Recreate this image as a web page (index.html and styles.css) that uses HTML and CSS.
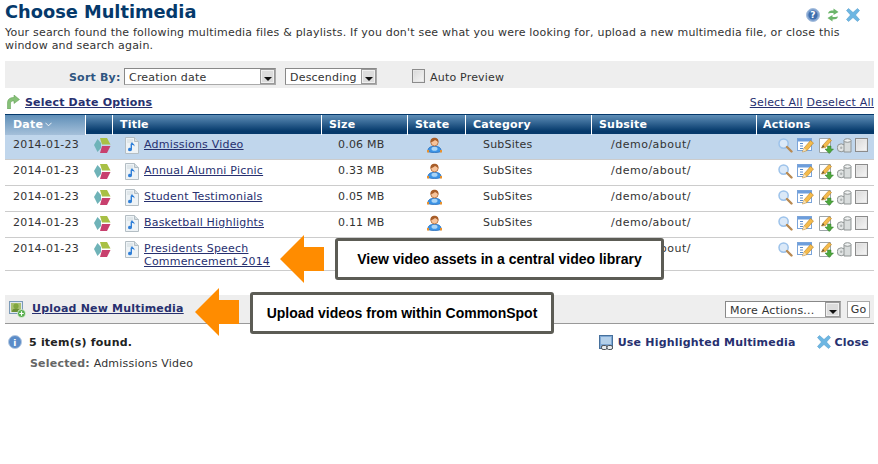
FILE: index.html
```html
<!DOCTYPE html>
<html lang="en">
<head>
<meta charset="utf-8">
<title>Choose Multimedia</title>
<link rel="stylesheet" href="styles.css">
</head>
<body>
<svg class="defs" width="0" height="0" aria-hidden="true">
  <defs>
    <symbol id="cube" viewBox="0 0 17 15">
      <path d="M0 7 L3.5 1 L7 5 L7 10 L3.5 14 Z" fill="#6fb3b8"/>
      <path d="M6 0 L13 0 L16.5 6.5 L8 6.5 Z" fill="#a8c045"/>
      <path d="M8 8 L16.5 8 L13 15 L6 15 Z" fill="#c8406e"/>
    </symbol>
    <symbol id="doc" viewBox="0 0 16 17">
      <path d="M1.5 0.5H10.5L14.5 4.5V16.5H1.5Z" fill="#eef3f6" stroke="#b4bec4"/>
      <path d="M10.5 .5V4.5H14.5" fill="#d6dfe4" stroke="#b4bec4"/>
      <path d="M3 3H9M3 5H9" stroke="#c8d2d8" stroke-width=".8"/>
      <path d="M8 5V12.6A2 1.7 0 1 1 6.6 11V7Z" fill="#2f7fd8"/>
      <path d="M8 5C9 7 11 7 10.4 9.6C10 8.4 9 8 8 8Z" fill="#2f7fd8"/>
    </symbol>
    <symbol id="user" viewBox="0 0 15 16">
      <path d="M.8 14.5C.8 10.5 3.5 9.3 7.5 9.3S14.2 10.5 14.2 14.5C11 16 4 16 .8 14.5Z" fill="#3d94e6" stroke="#2569b4" stroke-width=".7"/>
      <ellipse cx="7.5" cy="11.8" rx="3" ry="2" fill="#a9d4f6"/>
      <circle cx="7.5" cy="5.2" r="3.7" fill="#f7c39a" stroke="#a8602c" stroke-width=".7"/>
      <path d="M3.6 5.4C3.2 1.6 5.4.8 7.5.8S11.8 1.6 11.4 5.4C10.4 4.2 9.2 3.6 8 3 7 4.2 5 5 3.6 5.4Z" fill="#a85e2a"/>
      <path d="M0 13H2V15.5H0ZM13 13H15V15.5H13Z" fill="#e8912e"/>
    </symbol>
    <symbol id="mag" viewBox="0 0 15 15">
      <circle cx="5.6" cy="5.6" r="4.6" fill="#dbe9f8" stroke="#9cc2ea" stroke-width="1.5"/>
      <path d="M9 9L13.5 13.5" stroke="#b98a52" stroke-width="2.4" stroke-linecap="round"/>
    </symbol>
    <symbol id="form" viewBox="0 0 17 16">
      <rect x=".5" y="1.5" width="14" height="12" fill="#fff" stroke="#7aa4da"/>
      <rect x="1" y="2" width="13" height="2.5" fill="#6d9edc"/>
      <path d="M3 6.5H6M3 9H6M3 11.5H6" stroke="#5a8cc8" stroke-width="1.2"/>
      <path d="M5.5 15L7 11L13.5 3.5L16.5 6L10 13.5Z" fill="#f5bb4a" stroke="#b5802a" stroke-width=".6"/>
      <path d="M5.5 15L7 11L9.5 13.2Z" fill="#f3dfb8"/>
    </symbol>
    <symbol id="editdown" viewBox="0 0 16 17">
      <path d="M1.5 1.5H12.5V15.5H1.5Z" fill="#fff" stroke="#9ea6aa"/>
      <path d="M3.5 11L5 8L11 1.5L13.5 3.5L7.5 10.5Z" fill="#f5bb4a" stroke="#b5802a" stroke-width=".6"/>
      <path d="M3.5 11L5 8L6.5 9.8Z" fill="#6b5a3a"/>
      <path d="M9.5 9H13V12H15.5L11.2 16.5L7 12H9.5Z" fill="#4da83d" stroke="#327a28" stroke-width=".5"/>
    </symbol>
    <symbol id="bin" viewBox="0 0 15 15">
      <circle cx="4.2" cy="9.8" r="4" fill="#e2e5e5" stroke="#8f9494"/>
      <circle cx="4.2" cy="9.8" r="1.2" fill="#aeb3b3"/>
      <path d="M7 2.5H14V14H7Z" fill="#d8dcdc" stroke="#8f9494"/>
      <ellipse cx="10.5" cy="2.5" rx="3.5" ry="1.8" fill="#f0f2f2" stroke="#8f9494"/>
    </symbol>
    <symbol id="xmark" viewBox="0 0 14 14">
      <path d="M0.5 2.5L2.5 .5L7 4.5L11.5 .5L13.5 2.5L9.5 7L13.5 11.5L11.5 13.5L7 9.5L2.5 13.5L.5 11.5L4.5 7Z" fill="#6db6e2" stroke="#4a96c8" stroke-width=".5"/>
    </symbol>
    <symbol id="help" viewBox="0 0 14 14">
      <circle cx="7" cy="7" r="6.5" fill="#7fa2d0" stroke="#a6bedc"/>
      <circle cx="7" cy="7" r="4.6" fill="#3f6fae"/>
      <text x="7" y="10" text-anchor="middle" class="glyph">?</text>
    </symbol>
    <symbol id="refresh" viewBox="0 0 12 14">
      <path d="M1 5.5C1.5 3 3.5 2.6 6.5 2.6V.5L11.5 4L6.5 7V5C4.5 5 3 5 1 5.5Z" fill="#6cb56a"/>
      <path d="M11 8.5C10.5 11 8.5 11.4 5.5 11.4V13.5L.5 10L5.5 7V9C7.5 9 9 9 11 8.5Z" fill="#6cb56a"/>
    </symbol>
    <symbol id="info" viewBox="0 0 14 14">
      <circle cx="7" cy="7" r="6.5" fill="#5b8cc8" stroke="#b4c8e0"/>
      <text x="7" y="11" text-anchor="middle" class="glyph">i</text>
    </symbol>
  </defs>
</svg>

<main class="page">
  <header class="head">
    <h1 class="title">Choose Multimedia</h1>
    <div class="head-icons">
      <svg class="ic14"><use href="#help"/></svg>
      <svg class="ic-r"><use href="#refresh"/></svg>
      <svg class="ic14"><use href="#xmark"/></svg>
    </div>
  </header>
  <p class="intro">Your search found the following multimedia files &amp; playlists. If you don't see what you were looking for, upload a new multimedia file, or close this window and search again.</p>

  <div class="sortbar">
    <span class="sort-label">Sort By:</span>
    <div class="select sel-a"><span class="sel-text">Creation date</span><span class="sel-btn"></span></div>
    <div class="select sel-b"><span class="sel-text">Descending</span><span class="sel-btn"></span></div>
    <span class="check check-auto"></span>
    <span class="auto-label">Auto Preview</span>
  </div>

  <div class="opts">
    <svg class="ic-turn" viewBox="0 0 14 14"><path d="M1.5 14V8C1.5 4 4 2.5 8 2.5V0L13.5 4.5L8 8.5V6C5.5 6 4.5 6.5 4.5 9V14Z" fill="#86c078" stroke="#5b9a4d" stroke-width=".5"/></svg>
    <a class="opts-link" href="#">Select Date Options</a>
    <span class="opts-right"><a href="#">Select All</a> <a href="#">Deselect All</a></span>
  </div>

  <div class="grid">
    <div class="row thead">
      <div class="th th-sorted">Date<svg class="chev" viewBox="0 0 8 5"><path d="M.5 .5L4 4L7.5 .5" fill="none" stroke="#fff"/></svg></div>
      <div class="th"></div>
      <div class="th">Title</div>
      <div class="th">Size</div>
      <div class="th">State</div>
      <div class="th">Category</div>
      <div class="th">Subsite</div>
      <div class="th">Actions</div>
    </div>

    <div class="row tr selected">
      <div class="td">2014-01-23</div>
      <div class="td td-cube"><svg class="ic-cube"><use href="#cube"/></svg></div>
      <div class="td td-title"><svg class="ic-doc"><use href="#doc"/></svg><a href="#">Admissions Video</a></div>
      <div class="td td-size">0.06 MB</div>
      <div class="td td-state"><svg class="ic-user"><use href="#user"/></svg></div>
      <div class="td td-cat">SubSites</div>
      <div class="td td-sub">/demo/about/</div>
      <div class="td td-act"><svg class="a1"><use href="#mag"/></svg><svg class="a2"><use href="#form"/></svg><svg class="a3"><use href="#editdown"/></svg><svg class="a4"><use href="#bin"/></svg><span class="check"></span></div>
    </div>
    <div class="row tr">
      <div class="td">2014-01-23</div>
      <div class="td td-cube"><svg class="ic-cube"><use href="#cube"/></svg></div>
      <div class="td td-title"><svg class="ic-doc"><use href="#doc"/></svg><a href="#">Annual Alumni Picnic</a></div>
      <div class="td td-size">0.33 MB</div>
      <div class="td td-state"><svg class="ic-user"><use href="#user"/></svg></div>
      <div class="td td-cat">SubSites</div>
      <div class="td td-sub">/demo/about/</div>
      <div class="td td-act"><svg class="a1"><use href="#mag"/></svg><svg class="a2"><use href="#form"/></svg><svg class="a3"><use href="#editdown"/></svg><svg class="a4"><use href="#bin"/></svg><span class="check"></span></div>
    </div>
    <div class="row tr">
      <div class="td">2014-01-23</div>
      <div class="td td-cube"><svg class="ic-cube"><use href="#cube"/></svg></div>
      <div class="td td-title"><svg class="ic-doc"><use href="#doc"/></svg><a href="#">Student Testimonials</a></div>
      <div class="td td-size">0.05 MB</div>
      <div class="td td-state"><svg class="ic-user"><use href="#user"/></svg></div>
      <div class="td td-cat">SubSites</div>
      <div class="td td-sub">/demo/about/</div>
      <div class="td td-act"><svg class="a1"><use href="#mag"/></svg><svg class="a2"><use href="#form"/></svg><svg class="a3"><use href="#editdown"/></svg><svg class="a4"><use href="#bin"/></svg><span class="check"></span></div>
    </div>
    <div class="row tr">
      <div class="td">2014-01-23</div>
      <div class="td td-cube"><svg class="ic-cube"><use href="#cube"/></svg></div>
      <div class="td td-title"><svg class="ic-doc"><use href="#doc"/></svg><a href="#">Basketball Highlights</a></div>
      <div class="td td-size">0.11 MB</div>
      <div class="td td-state"><svg class="ic-user"><use href="#user"/></svg></div>
      <div class="td td-cat">SubSites</div>
      <div class="td td-sub">/demo/about/</div>
      <div class="td td-act"><svg class="a1"><use href="#mag"/></svg><svg class="a2"><use href="#form"/></svg><svg class="a3"><use href="#editdown"/></svg><svg class="a4"><use href="#bin"/></svg><span class="check"></span></div>
    </div>
    <div class="row tr tr-tall">
      <div class="td">2014-01-23</div>
      <div class="td td-cube"><svg class="ic-cube"><use href="#cube"/></svg></div>
      <div class="td td-title"><svg class="ic-doc"><use href="#doc"/></svg><a href="#">Presidents Speech Commencement 2014</a></div>
      <div class="td td-size"></div>
      <div class="td td-state"></div>
      <div class="td td-cat"></div>
      <div class="td td-sub">/demo/about/</div>
      <div class="td td-act"><svg class="a1"><use href="#mag"/></svg><svg class="a2"><use href="#form"/></svg><svg class="a3"><use href="#editdown"/></svg><svg class="a4"><use href="#bin"/></svg><span class="check"></span></div>
    </div>
  </div>

  <div class="upload">
    <svg class="ic-up" viewBox="0 0 17 17">
      <rect x=".5" y=".5" width="13" height="12" fill="#dfe8f0" stroke="#7a9ab8"/>
      <rect x="2" y="2" width="10" height="9" fill="#a8c070"/>
      <circle cx="7" cy="5" r="2.6" fill="#7fa63f"/>
      <path d="M3 11C3 8 5 7.5 7 7.5S11 8 11 11Z" fill="#6b8f35"/>
      <circle cx="12.5" cy="12.5" r="4" fill="#55ad4a" stroke="#fff" stroke-width=".6"/>
      <path d="M12.5 10.3V14.7M10.3 12.5H14.7" stroke="#fff" stroke-width="1.2"/>
    </svg>
    <a class="upload-link" href="#">Upload New Multimedia</a>
    <div class="upload-right">
      <div class="select sel-c"><span class="sel-text">More Actions...</span><span class="sel-btn"></span></div>
      <span class="go">Go</span>
    </div>
  </div>

  <div class="status">
    <svg class="ic14"><use href="#info"/></svg>
    <strong class="found">5 item(s) found.</strong>
    <span class="status-right">
      <svg class="ic-use" viewBox="0 0 15 15">
        <rect x=".5" y=".5" width="13" height="13" fill="#7fa8d4" stroke="#46709c"/>
        <rect x="2" y="2" width="10" height="7" fill="#b4d0ea"/>
        <rect x="2.5" y="10.5" width="5.5" height="4" rx="1.6" fill="#e8ecef" stroke="#4a4f55"/>
        <rect x="8" y="10.5" width="5.5" height="4" rx="1.6" fill="#e8ecef" stroke="#4a4f55"/>
      </svg>
      <a class="act-link" href="#">Use Highlighted Multimedia</a>
      <svg class="ic14 ic-close"><use href="#xmark"/></svg>
      <a class="act-link" href="#">Close</a>
    </span>
  </div>
  <p class="selected-line"><b>Selected:</b> Admissions Video</p>

  <svg class="arrow arrow-1" viewBox="0 0 44 48"><path d="M0 24L24 0V12H44V36H24V48Z" fill="#ff8c00"/></svg>
  <div class="callout callout-1">View video assets in a central video library</div>
  <svg class="arrow arrow-2" viewBox="0 0 44 48"><path d="M0 24L24 0V12H44V36H24V48Z" fill="#ff8c00"/></svg>
  <div class="callout callout-2">Upload videos from within CommonSpot</div>
</main>
</body>
</html>
```

FILE: styles.css
```css
* { box-sizing: border-box; }
html, body { margin: 0; background: #fff; }
body {
  font-family: "DejaVu Sans", Verdana, sans-serif;
  font-size: 11px;
  letter-spacing: .2px;
  color: #222;
  width: 878px;
  height: 464px;
  overflow: hidden;
}
.defs { position: absolute; }
.glyph { font: bold 9px "DejaVu Sans", sans-serif; fill: #fff; }
.page { position: relative; width: 878px; height: 464px; padding: 0 4px 0 5px; }
a { color: #27306f; }

.head { display: flex; justify-content: space-between; height: 24px; }
.title { margin: 0; font-size: 17.8px; line-height: 24px; font-weight: bold; color: #05396b; letter-spacing: 0; }
.head-icons { display: flex; align-items: center; gap: 7px; padding: 5px 14px 0 0; }
.ic14 { width: 14px; height: 14px; flex: none; }
.ic-r { width: 12px; height: 14px; flex: none; }

.intro { margin: 0; height: 37px; padding-top: 2px; line-height: 13px; color: #333; }

.sortbar { height: 27px; background: #eee; display: flex; align-items: center; padding-top: 3px; }
.sort-label { margin: 2px 0 0 64px; width: 52px; white-space: nowrap; font-weight: bold; color: #2f5580; }
.select { display: flex; align-items: stretch; height: 17px; background: #fff; border: 1px solid #aaa; border-top-color: #888; border-left-color: #888; }
.sel-text { flex: 1; padding-left: 4px; line-height: 17px; color: #333; white-space: nowrap; overflow: hidden; }
.sel-btn { position: relative; width: 15px; background: #dcdcdc; border: 1px solid #999; box-shadow: inset 0 0 0 1px #f0f0f0; }
.sel-btn::after { content: ""; position: absolute; left: 3px; top: 7px; border: 4px solid transparent; border-top-color: #111; border-bottom: 0; }
.sel-a { width: 152px; margin-left: 3px; }
.sel-b { width: 92px; margin-left: 9px; }
.check { display: inline-block; width: 13px; height: 14px; border: 1px solid #8b8b8b; background: linear-gradient(135deg, #d8d8d8, #f6f6f6); box-shadow: inset 0 0 0 1px #e6e6e6; flex: none; }
.check-auto { margin-left: 35px; }
.auto-label { margin: 2px 0 0 5px; color: #333; }

.opts { height: 26px; display: flex; align-items: center; padding-top: 3px; }
.ic-turn { width: 14px; height: 14px; margin: 0 0 1px 1px; }
.opts-link { margin-left: 5px; font-weight: bold; }
.opts-right { margin-left: auto; color: #27306f; }

.row { display: grid; grid-template-columns: 81px 27px 209px 86px 58px 126px 165px 117px; }
.thead { height: 20px; background: linear-gradient(#5f8fb8, #05396b 85%); border-top: 1px solid #05396b; }
.th { color: #fff; font-weight: bold; line-height: 20px; padding-left: 7px; border-right: 1px solid #fff; }
.th:first-child { padding-left: 8px; }
.th:last-child { border-right: 0; padding-left: 6px; }
.th-sorted { background: linear-gradient(#5f8fb8, #a5c0da); color: #fff; }
.chev { width: 7px; height: 5px; margin: 0 0 1px 2px; }

.tr { height: 26px; border-bottom: 1px solid #ccc; }
.tr-tall { height: 33px; }
.selected { background: #c0d6ec; }
.td { padding: 3px 0 0 8px; line-height: 16px; color: #333; }
.td-cube { padding: 4px 0 0 8px; }
.ic-cube { display: block; width: 17px; height: 15px; }
.td-title { display: flex; padding-left: 11px; gap: 4px; line-height: 13px; padding-top: 4px; }
.td-title a { width: 140px; }
.ic-doc { width: 16px; height: 17px; flex: none; margin-top: -1px; }
.td-size { padding-left: 16px; }
.td-state { padding: 3px 0 0 19px; }
.ic-user { display: block; width: 15px; height: 16px; }
.td-cat { padding-left: 17px; }
.td-sub { padding-left: 19px; letter-spacing: .5px; }
.td-act { display: flex; padding: 3px 0 0 22px; align-items: flex-start; }
.td-act svg { flex: none; display: block; }
.a1 { width: 15px; height: 15px; margin: 1px 0 0 -1px; }
.a2 { width: 17px; height: 16px; margin-left: 4px; }
.a3 { width: 16px; height: 17px; margin-left: 4px; }
.a4 { width: 15px; height: 15px; margin: 1px 0 0 3px; }
.td-act .check { margin-left: 3px; margin-top: 1px; }

.upload { margin-top: 24px; height: 29px; background: #eee; border-bottom: 1px solid #999; display: flex; align-items: center; }
.ic-up { width: 17px; height: 17px; margin-left: 4px; }
.upload-link { margin: 0 0 2px 6px; font-weight: bold; }
.upload-right { margin-left: auto; display: flex; align-items: center; gap: 6px; padding-right: 4px; }
.sel-c { width: 116px; }
.go { display: block; width: 23px; height: 17px; line-height: 15px; text-align: center; border: 1px solid #aaa; background: #fff; color: #333; }

.status { display: flex; align-items: center; height: 22px; margin-top: 7px; padding-left: 3px; }
.found { margin-left: 7px; color: #222; }
.status-right { margin-left: auto; display: flex; align-items: center; }
.ic-use { width: 15px; height: 15px; margin-right: 4px; }
.act-link { font-weight: bold; text-decoration: none; padding-right: 5px; }
.ic-close { margin: 0 4px 0 16px; }
.selected-line { margin: 3px 0 0 25px; line-height: 16px; color: #333; }
.selected-line b { color: #666; }

.arrow { position: absolute; width: 44px; height: 48px; }
.arrow-1 { left: 280px; top: 235px; }
.arrow-2 { left: 195px; top: 288px; }
.callout {
  position: absolute;
  display: flex; align-items: center; justify-content: center;
  background: #fff;
  border: 3px solid #5c5c55;
  border-radius: 3px;
  font-family: "Liberation Sans", Arial, sans-serif;
  font-weight: bold;
  font-size: 14px;
  letter-spacing: 0;
  color: #000;
}
.callout-1 { left: 335px; top: 238px; width: 329px; height: 42px; }
.callout-2 { left: 250px; top: 292px; width: 304px; height: 42px; }
```
